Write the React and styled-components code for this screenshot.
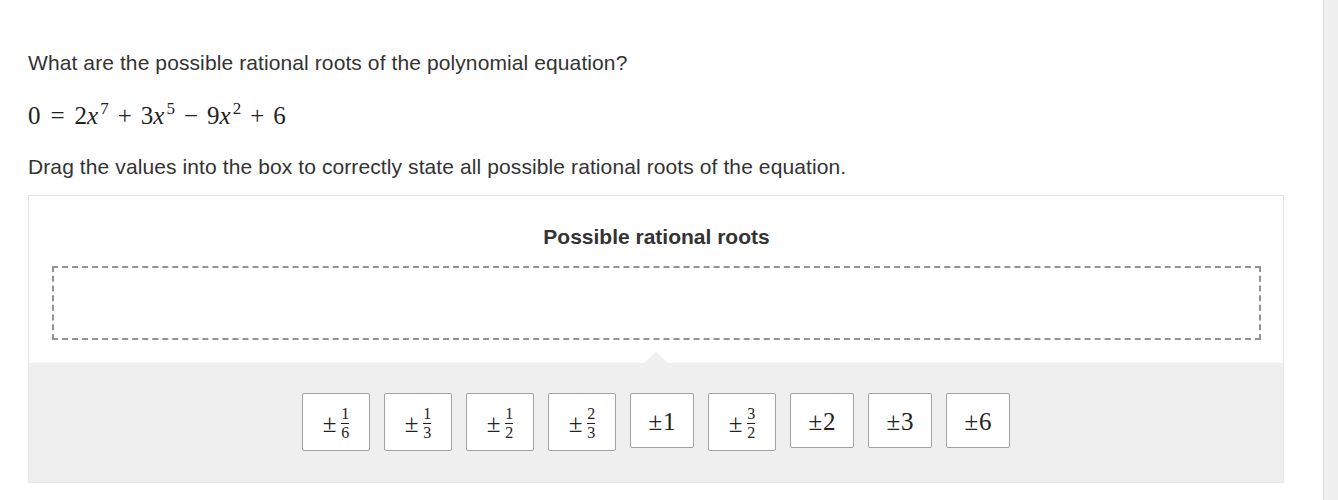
import React from 'react';
import styled, { createGlobalStyle } from 'styled-components';

const GlobalStyle = createGlobalStyle`
    body {
        margin: 0;
        background: #ffffff;
        font-family: "Liberation Sans", Arial, sans-serif;
        color: #333333;
    }
`;

const Page = styled.div`
    display: flex;
    height: 500px;
    overflow: hidden;
`;

const Main = styled.div`
    flex: 1;
    padding: 0 39px 0 28px;
`;

const ScrollTrack = styled.div`
    width: 14px;
    background: #f0f0f0;
    border-left: 1px solid #dcdcdc;
`;

const Prompt = styled.p`
    margin: ${props => props.$top}px 0 0;
    font-size: 21px;
    line-height: 26px;
    letter-spacing: 0.1px;
    color: #333333;
`;

const Equation = styled.div`
    margin-top: 26px;
    font-family: "Liberation Serif", "Times New Roman", serif;
    font-size: 25px;
    line-height: 28px;
    color: #222222;
`;

const Var = styled.i`
    font-style: italic;
`;

const Sup = styled.sup`
    font-size: 17px;
    vertical-align: 10px;
    line-height: 0;
    margin-left: 2px;
`;

const Op = styled.span`
    margin: 0 ${props => props.$space}px;
`;

const Board = styled.div`
    margin-top: 15px;
    border: 1px solid #e6e6e6;
    display: flex;
    flex-direction: column;
`;

const TargetArea = styled.div`
    background: #ffffff;
    padding: 29px 22px 23px 23px;
    display: flex;
    flex-direction: column;
    align-items: center;
`;

const TargetTitle = styled.div`
    font-weight: bold;
    font-size: 21px;
    line-height: 24px;
    color: #333333;
`;

const DropBox = styled.div`
    align-self: stretch;
    margin-top: 17px;
    height: 70px;
    border: 2px dashed #939393;
`;

const Tray = styled.div`
    position: relative;
    background: #efefef;
    display: flex;
    justify-content: center;
    gap: 14px;
    padding: 30px 0 31px;
    align-items: flex-start;

    &::before {
        content: '';
        position: absolute;
        top: -11px;
        left: 50%;
        margin-left: -12px;
        border-left: 12px solid transparent;
        border-right: 12px solid transparent;
        border-bottom: 11px solid #efefef;
    }
`;

const Tile = styled.div`
    box-sizing: border-box;
    height: ${props => (props.$tall ? 58 : 55)}px;
    min-width: ${props => (props.$tall ? 68 : 64)}px;
    padding: 3px 14px 0;
    background: #ffffff;
    border: 1px solid #a3a3a3;
    border-radius: 2px;
    display: flex;
    align-items: center;
    justify-content: center;
    font-family: "Liberation Serif", "Times New Roman", serif;
    font-size: 25px;
    color: #222222;
`;

const PlusMinus = styled.span`
    margin-right: ${props => (props.$gap ? 5 : 1)}px;
`;

const Frac = styled.span`
    display: inline-flex;
    flex-direction: column;
    align-items: center;
    font-size: 16px;
    line-height: 16px;
`;

const Numer = styled.span`
    padding-bottom: 1px;
`;

const Denom = styled.span`
    border-top: 1px solid #222222;
    padding-top: 1px;
    align-self: stretch;
    text-align: center;
`;

const values = [
    { n: '1', d: '6' },
    { n: '1', d: '3' },
    { n: '1', d: '2' },
    { n: '2', d: '3' },
    { v: '1' },
    { n: '3', d: '2' },
    { v: '2' },
    { v: '3' },
    { v: '6' },
];

function App() {
    return (
        <Page>
            <GlobalStyle />
            <Main>
                <Prompt $top={50}>What are the possible rational roots of the polynomial equation?</Prompt>
                <Equation>
                    0<Op $space={10}>=</Op>2<Var>x</Var><Sup>7</Sup>
                    <Op $space={9}>+</Op>3<Var>x</Var><Sup>5</Sup>
                    <Op $space={9}>−</Op>9<Var>x</Var><Sup>2</Sup>
                    <Op $space={9}>+</Op>6
                </Equation>
                <Prompt $top={24}>Drag the values into the box to correctly state all possible rational roots of the equation.</Prompt>
                <Board>
                    <TargetArea>
                        <TargetTitle>Possible rational roots</TargetTitle>
                        <DropBox />
                    </TargetArea>
                    <Tray>
                        {values.map((item, i) => (
                            <Tile key={i} $tall={!item.v}>
                                <PlusMinus $gap={!item.v}>±</PlusMinus>
                                {item.v ? item.v : (
                                    <Frac>
                                        <Numer>{item.n}</Numer>
                                        <Denom>{item.d}</Denom>
                                    </Frac>
                                )}
                            </Tile>
                        ))}
                    </Tray>
                </Board>
            </Main>
            <ScrollTrack />
        </Page>
    );
}

export default App;
